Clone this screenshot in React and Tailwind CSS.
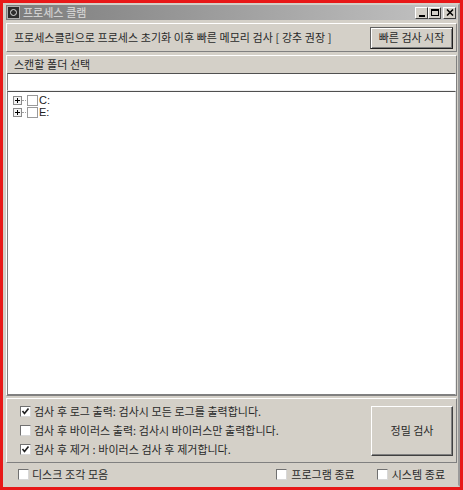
const font = { fontFamily: '"Noto Sans CJK KR", sans-serif' };

function Check({ checked }) {
  return (
    <span className="w-[11px] h-[11px] shrink-0 bg-white border border-t-[#707070] border-l-[#707070] border-r-[#d8d8d8] border-b-[#d8d8d8] flex items-center justify-center">
      {checked && (
        <svg width="9" height="9" viewBox="0 0 9 9">
          <path d="M1.5 4 L3.5 6.5 L7.5 1.5" fill="none" stroke="#222" strokeWidth="1.7" />
        </svg>
      )}
    </span>
  );
}

function CheckRow({ checked, children, className = "" }) {
  return (
    <div className={"flex items-center h-[19px] " + className}>
      <Check checked={checked} />
      <span className="leading-none">{children}</span>
    </div>
  );
}

function TreeRow({ label }) {
  return (
    <div className="flex items-center h-[12.5px]">
      <span className="w-[9px] h-[9px] border border-[#8a8a8a] bg-[#f4f4f4] flex items-center justify-center relative">
        <span className="absolute w-[5px] h-px bg-black" />
        <span className="absolute w-px h-[5px] bg-black" />
      </span>
      <span className="w-[4px] border-t border-dotted border-[#a0a0a0]" />
      <span className="w-[11px] h-[11px] bg-white border border-[#9a9a9a] ml-px" />
      <span className="ml-px text-[11px] leading-none text-[#222]" style={{ fontFamily: '"Liberation Sans", sans-serif' }}>{label}</span>
    </div>
  );
}

export default function App() {
  return (
    <div
      className="w-[463px] h-[490px] bg-[#d4d0c8] border-[3px] border-[#e81818] flex flex-col text-[11px] leading-none [word-spacing:0.2px] text-[#2a2a2a] overflow-hidden"
      style={font}
    >
      <div className="flex-1 flex flex-col border-[2px] border-l-[3px] border-[#d4d0c8] border-r-[#9a9a9a] min-h-0">
        <div className="h-[15px] mr-px shrink-0 bg-gradient-to-r from-[#7c7c7c] to-[#c4c4c4] flex items-center pl-[1px] pr-[1px]">
          <span className="w-[13px] h-[13px] bg-[#2c2c2c] border border-[#b0b0b0] flex items-center justify-center">
            <span className="w-[7px] h-[7px] rounded-full border border-[#ddd]" />
          </span>
          <span className="ml-[3px] text-[#cfcfcf] font-medium">프로세스 클램</span>
          <div className="ml-auto flex items-center">
            <span className="w-[13px] h-[12px] bg-[#d4d0c8] border border-t-white border-l-white border-r-[#404040] border-b-[#404040] flex items-end justify-center pb-[1px]">
              <span className="w-[6px] h-[2px] bg-black" />
            </span>
            <span className="w-[13px] h-[12px] bg-[#d4d0c8] border border-t-white border-l-white border-r-[#404040] border-b-[#404040] flex items-center justify-center">
              <span className="w-[8px] h-[7px] border border-black border-t-2" />
            </span>
            <span className="ml-[2px] w-[13px] h-[12px] bg-[#d4d0c8] border border-t-white border-l-white border-r-[#404040] border-b-[#404040] flex items-center justify-center">
              <svg width="8" height="7" viewBox="0 0 8 7"><path d="M1 0.5 L7 6.5 M7 0.5 L1 6.5" stroke="#000" strokeWidth="1.5" /></svg>
            </span>
          </div>
        </div>

        <div className="h-[29px] mt-[3px] mr-px shrink-0 border border-t-white border-l-white border-r-[#808080] border-b-[#808080] flex items-center pl-[7px] pr-[3px]">
          <span>프로세스클린으로 프로세스 초기화 이후 빠른 메모리 검사 [ 강추 권장 ]</span>
          <button className="ml-auto w-[83px] h-[22px] bg-[#d4d0c8] border border-t-[#606060] border-l-[#606060] border-r-[#202020] border-b-[#202020] shadow-[inset_1px_1px_0_#fff,inset_-1px_-1px_0_#808080]">
            빠른 검사 시작
          </button>
        </div>

        <div className="flex-1 mt-[3px] mr-px min-h-0 border border-t-white border-l-white border-r-[#808080] border-b-[#808080] flex flex-col">
          <div className="h-[17px] shrink-0 pl-[7px] flex items-center">스캔할 폴더 선택</div>
          <div className="h-[18px] shrink-0 bg-white border border-t-[#505050] border-l-[#808080] border-b-[#eee] border-r-white" />
          <div className="flex-1 bg-white border border-t-[#505050] border-l-[#808080] border-b-[#808080] border-r-[#e8e8e8] pt-[2px] pl-[5px]">
            <TreeRow label="C:" />
            <TreeRow label="E:" />
          </div>
        </div>

        <div className="h-[65px] mt-[2px] mr-px shrink-0 border border-t-white border-l-white border-r-[#808080] border-b-[#808080] flex items-center pl-[13px] pr-[3px]">
          <div className="flex flex-col">
            <CheckRow className="gap-[3px]" checked>검사 후 로그 출력: 검사시 모든 로그를 출력합니다.</CheckRow>
            <CheckRow className="gap-[3px]">검사 후 바이러스 출력: 검사시 바이러스만 출력합니다.</CheckRow>
            <CheckRow className="gap-[3px]" checked>검사 후 제거 : 바이러스 검사 후 제거합니다.</CheckRow>
          </div>
          <button className="ml-auto w-[82px] h-[50px] bg-[#d4d0c8] border border-t-white border-l-white border-r-[#404040] border-b-[#404040] shadow-[inset_-1px_-1px_0_#808080]">
            정밀 검사
          </button>
        </div>

        <div className="h-[22px] shrink-0 flex items-center pl-[12px] pr-[13px]">
          <CheckRow className="gap-[3px]">디스크 조각 모음</CheckRow>
          <CheckRow className="gap-[4px] ml-auto">프로그램 종료</CheckRow>
          <CheckRow className="gap-[4px] ml-[22px]">시스템 종료</CheckRow>
        </div>
      </div>
    </div>
  );
}
